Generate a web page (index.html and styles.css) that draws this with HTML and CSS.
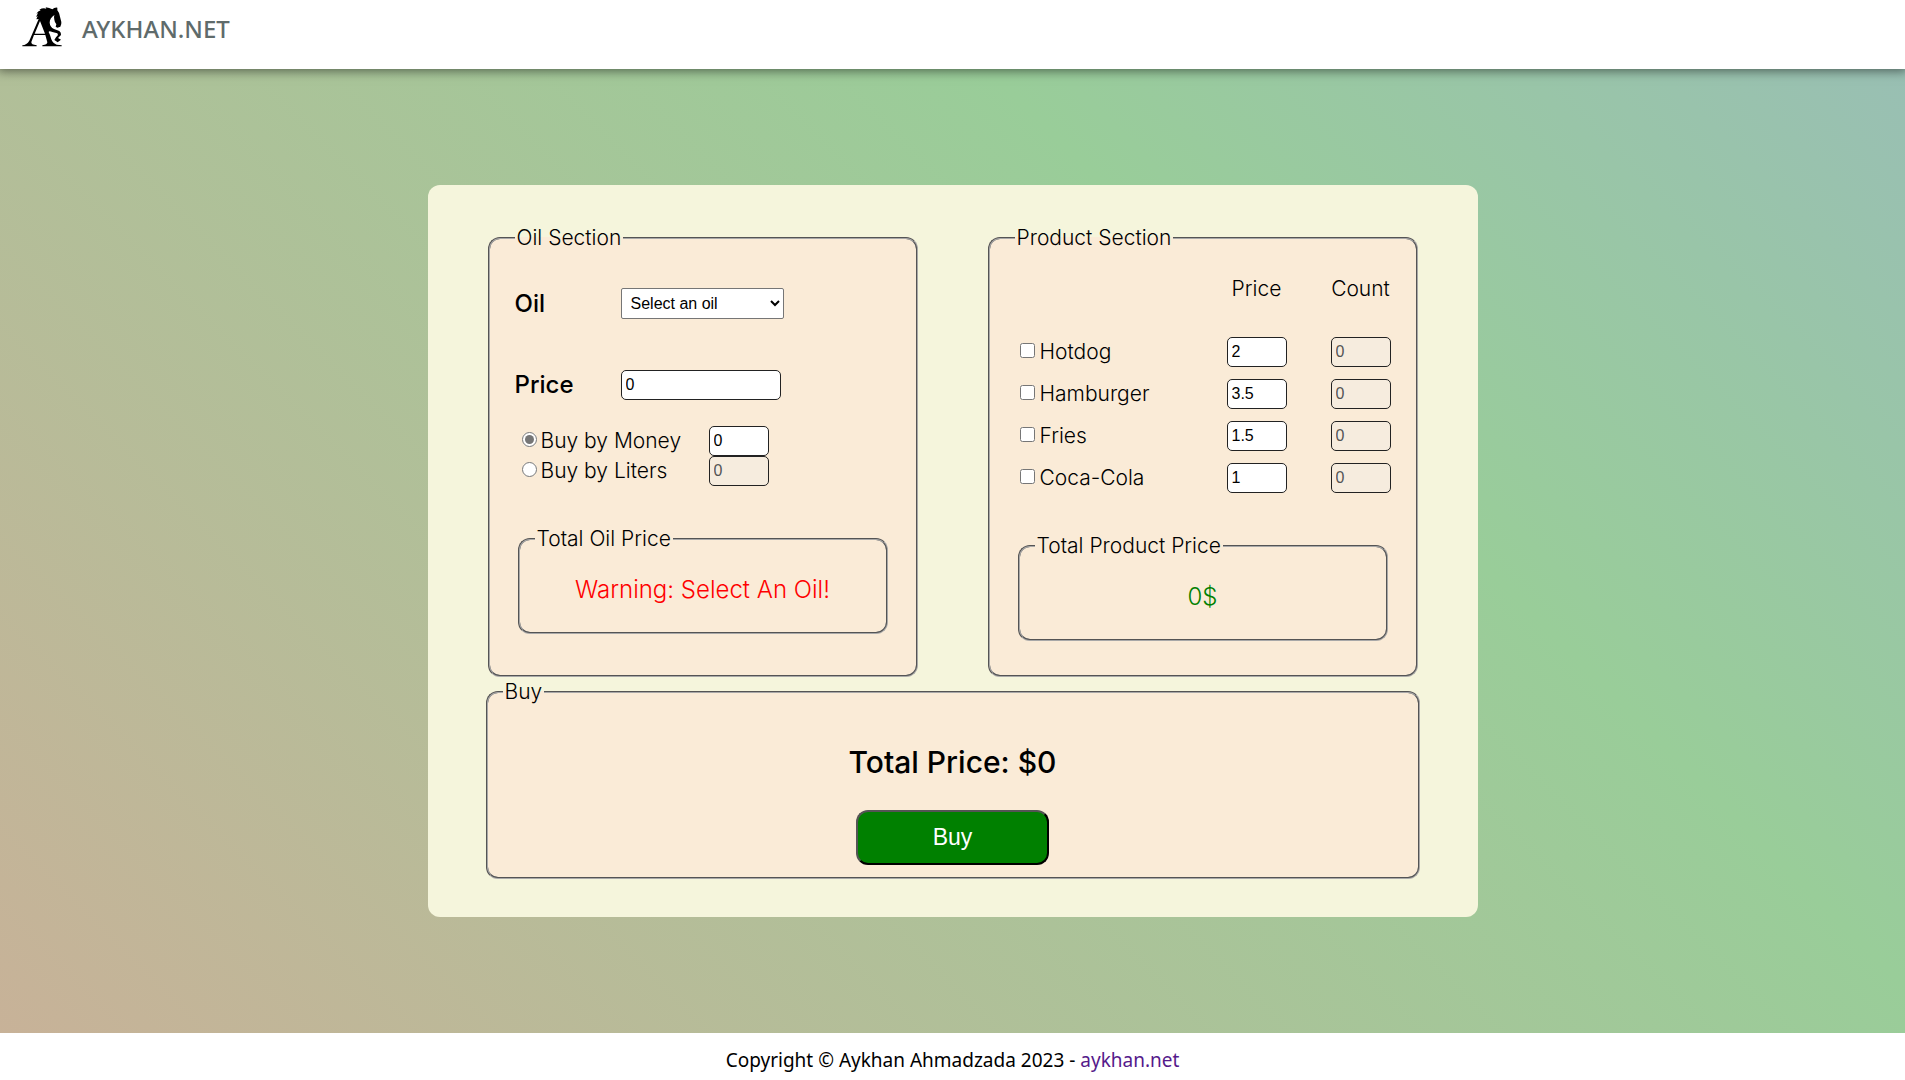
FILE: index.html
```
<!DOCTYPE html>
<html lang="en">
<head>
<meta charset="utf-8">
<meta name="viewport" content="width=device-width, initial-scale=1">
<title>AYKHAN.NET</title>
<link rel="stylesheet" href="styles.css">
</head>
<body>
<header class="site-header">
  <svg class="logo" viewBox="0 0 120 120" aria-hidden="true">
    <path d="M43 37 L47 27 L42 30 L48 18 L43 20 Q48 12 56 10 L52 8 Q62 2 73 5 L71 1 Q82 2 91 7 Q97 1 106 2 L106 10 Q113 18 114 29 L118 45 Q119 53 115 59 L106 62 L101 59 L103 52 Q98 46 97 38 Q95 30 97 24 Q83 34 83 47 Q84 60 96 66 L112 72 Q118 77 117 84 L108 93 L117 98 L107 106 L97 99 L102 91 L108 84 L106 79 L91 75 Q81 70 80 75 Q84 82 88 97 Q93 110 104 113 L119 115 V118 H61 V115 Q76 113 76 106 L70 84 H36 L28 105 Q27 113 44 115 V118 H1 V115 Q14 114 22 101 L50 36 Z M38 80 H69 L54 42 Z" fill="#000" fill-rule="evenodd"/>
  </svg>
  <span class="brand">AYKHAN.NET</span>
</header>

<main class="page">
  <form class="station">
    <div class="sections">
      <fieldset class="panel">
        <legend>Oil Section</legend>
        <div class="oil-row">
          <label class="oil-label" for="oil">Oil</label>
          <select class="oil-select" id="oil"><option>Select an oil</option></select>
        </div>
        <div class="oil-row price-row">
          <label class="oil-label" for="oil-price">Price</label>
          <input class="field oil-price" id="oil-price" type="text" value="0">
        </div>
        <div class="methods">
          <div class="method">
            <input class="tick" id="by-money" type="radio" name="method" checked>
            <label for="by-money">Buy by Money</label>
            <input class="field small" type="text" value="0" aria-label="Money">
          </div>
          <div class="method">
            <input class="tick" id="by-liters" type="radio" name="method">
            <label for="by-liters">Buy by Liters</label>
            <input class="field small" type="text" value="0" aria-label="Liters" disabled>
          </div>
        </div>
        <fieldset class="total">
          <legend>Total Oil Price</legend>
          <p class="amount warning">Warning: Select An Oil!</p>
        </fieldset>
      </fieldset>

      <fieldset class="panel">
        <legend>Product Section</legend>
        <table class="products">
          <thead>
            <tr><td></td><th class="price" scope="col">Price</th><th class="count" scope="col">Count</th></tr>
          </thead>
          <tbody>
            <tr>
              <td><span class="product"><input class="tick" id="hotdog" type="checkbox"><label for="hotdog">Hotdog</label></span></td>
              <td class="price"><input class="field small" type="text" value="2" aria-label="Hotdog price"></td>
              <td class="count"><input class="field small" type="text" value="0" aria-label="Hotdog count" disabled></td>
            </tr>
            <tr>
              <td><span class="product"><input class="tick" id="hamburger" type="checkbox"><label for="hamburger">Hamburger</label></span></td>
              <td class="price"><input class="field small" type="text" value="3.5" aria-label="Hamburger price"></td>
              <td class="count"><input class="field small" type="text" value="0" aria-label="Hamburger count" disabled></td>
            </tr>
            <tr>
              <td><span class="product"><input class="tick" id="fries" type="checkbox"><label for="fries">Fries</label></span></td>
              <td class="price"><input class="field small" type="text" value="1.5" aria-label="Fries price"></td>
              <td class="count"><input class="field small" type="text" value="0" aria-label="Fries count" disabled></td>
            </tr>
            <tr>
              <td><span class="product"><input class="tick" id="cola" type="checkbox"><label for="cola">Coca-Cola</label></span></td>
              <td class="price"><input class="field small" type="text" value="1" aria-label="Coca-Cola price"></td>
              <td class="count"><input class="field small" type="text" value="0" aria-label="Coca-Cola count" disabled></td>
            </tr>
          </tbody>
        </table>
        <fieldset class="total">
          <legend>Total Product Price</legend>
          <p class="amount good">0$</p>
        </fieldset>
      </fieldset>
    </div>

    <fieldset class="checkout">
      <legend>Buy</legend>
      <h1 class="grand-total">Total Price: $0</h1>
      <button class="buy" type="button">Buy</button>
    </fieldset>
  </form>
</main>

<footer class="site-footer">Copyright © Aykhan Ahmadzada 2023 - <a class="site-link" href="#">aykhan.net</a></footer>
</body>
</html>
```
FILE: styles.css
```
* { box-sizing: border-box; }

body {
  margin: 0;
  min-height: 100vh;
  display: flex;
  flex-direction: column;
  font-family: Inter, "Liberation Sans", sans-serif;
  font-size: 21px;
  font-weight: 300;
  line-height: 30px;
  color: #000;
  background: linear-gradient(45deg, #cbb098 -3%, #99cd99 67%, #99bbbb 107%);
}

.site-header {
  display: flex;
  align-items: flex-start;
  gap: 20px;
  height: 69px;
  padding: 7px 22px;
  background: #fff;
  box-shadow: 0 0 10px 2px rgba(0, 0, 0, 0.5);
}
.logo { width: 40px; height: 40px; }
.brand {
  font-family: "Noto Sans", "Open Sans", sans-serif;
  font-size: 24px;
  font-weight: 500;
  line-height: 44px;
  color: #5f6b6b;
}

.page {
  flex: 1;
  display: flex;
  align-items: center;
  justify-content: center;
  padding: 24px;
}
.station {
  width: 100%;
  max-width: 1050px;
  padding: 38px 58px;
  border-radius: 12px;
  background: beige;
}
.sections {
  display: grid;
  grid-template-columns: repeat(auto-fit, minmax(400px, 1fr));
  gap: 70px;
  padding: 0 2px;
}

fieldset {
  min-width: 0;
  margin: 0;
  border: 2px groove #a8a8a8;
  border-radius: 12px;
}
legend { padding: 0 2px; }
.panel {
  padding: 0 25px 34px;
  background: antiquewhite;
}

.field {
  height: 30px;
  padding: 0 4px;
  border: 1px solid #222;
  border-radius: 5px;
  background: #fff;
  font: 16px "Liberation Sans", sans-serif;
  color: #000;
}
.field:disabled {
  background: rgba(239, 239, 239, 0.3);
  color: #545454;
}
.small { width: 60px; }
.tick {
  width: 15px;
  height: 15px;
  margin: 0 0 3px;
  accent-color: #767676;
}

.oil-row {
  display: grid;
  grid-template-columns: 106px 1fr;
  align-items: center;
  justify-items: start;
  margin-top: 35px;
}
.price-row { margin-top: 51px; }
.oil-label { font-size: 24px; font-weight: 500; }
.oil-select {
  width: 163px;
  height: 31px;
  padding: 0 5px;
  border: 1px solid #767676;
  border-radius: 2px;
  background: #fff;
  font: 16px "Liberation Sans", sans-serif;
  color: #000;
}
.oil-price { width: 160px; }

.methods { margin: 26px 0 38px 7px; }
.method {
  display: grid;
  grid-template-columns: 15px 164px 60px;
  column-gap: 4px;
  align-items: center;
}

.total {
  margin: 0 3px;
  padding: 0 15px 27px;
}
.amount {
  margin: 21px 0 0;
  font-size: 24px;
  text-align: center;
}
.warning { color: red; }
.good { color: green; }

.products {
  width: 100%;
  margin: 21px 0 32px;
  border-collapse: collapse;
}
.products th { padding: 0 0 27px; font-weight: 300; }
.products td { height: 42px; padding: 0; }
.products .price { width: 104px; padding-right: 44px; }
.products .count { width: 60px; }
.products .field { display: block; }
.product {
  display: flex;
  align-items: center;
  gap: 5px;
  padding-left: 5px;
}

.checkout {
  display: flex;
  flex-direction: column;
  align-items: center;
  padding: 0 15px 12px;
  background: antiquewhite;
}
.grand-total {
  margin: 34px 0 27px;
  font-size: 30px;
  font-weight: 500;
  line-height: 42px;
}
.buy {
  width: 193px;
  height: 55px;
  border: 2px outset #000;
  border-radius: 12px;
  background: green;
  font: 23px "Liberation Sans", sans-serif;
  color: #fff;
}

.site-footer {
  padding: 12px 16px 5px;
  background: #fff;
  font-family: "Noto Sans", "Open Sans", sans-serif;
  font-size: 19px;
  font-weight: 400;
  text-align: center;
}
.site-link { color: #551a8b; text-decoration: none; }
```
